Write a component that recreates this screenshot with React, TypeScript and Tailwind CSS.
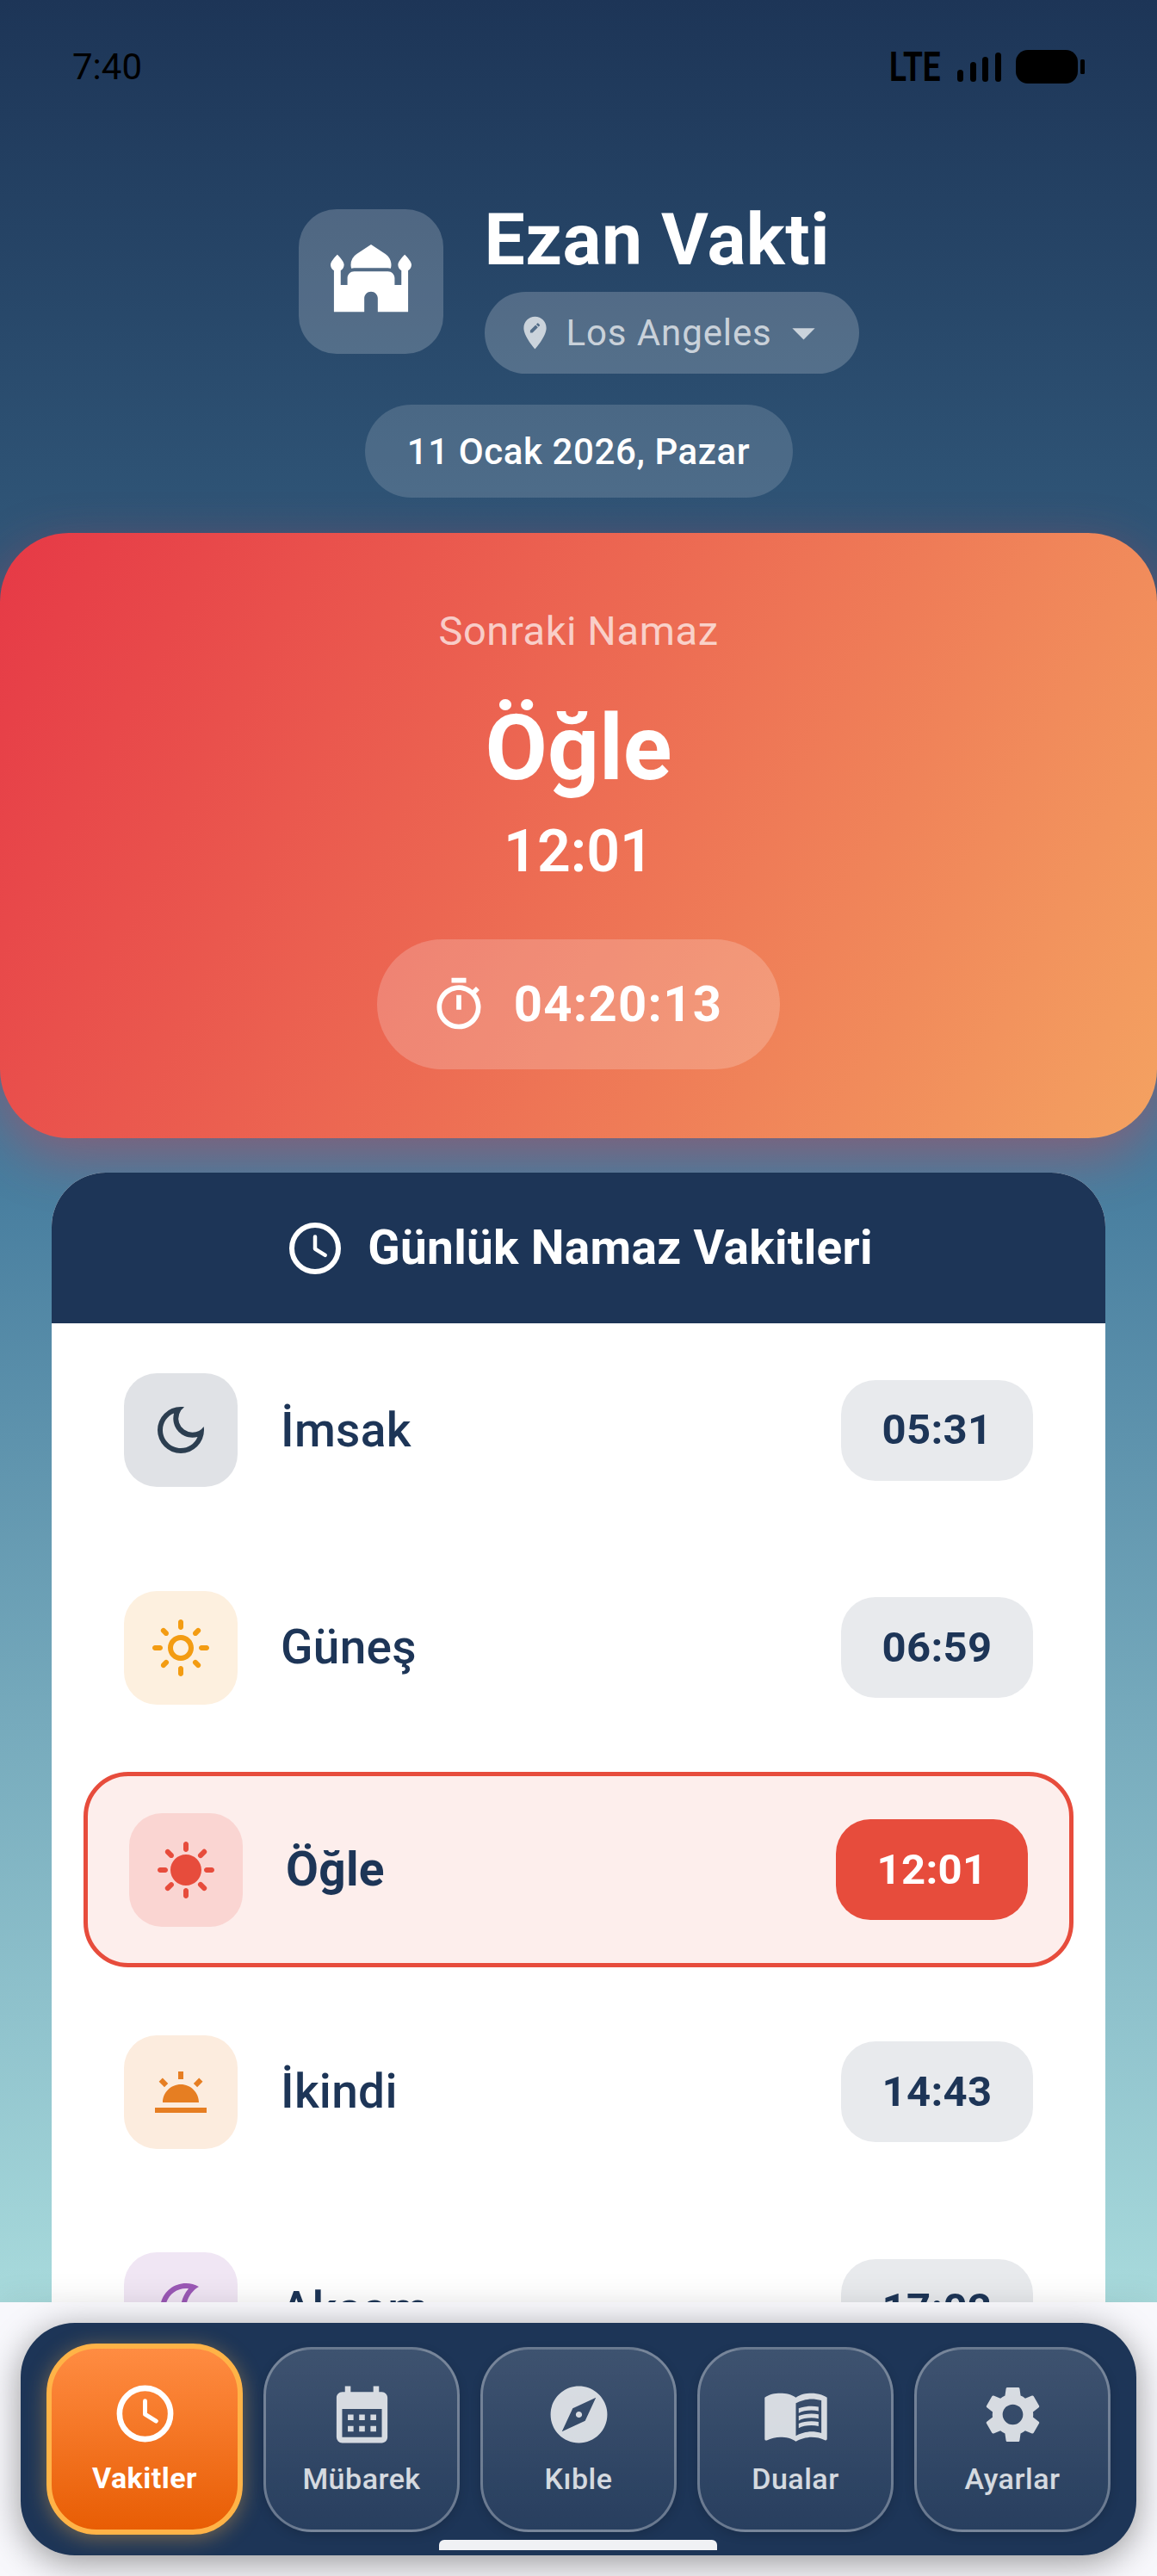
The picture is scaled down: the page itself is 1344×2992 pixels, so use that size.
import { ReactNode } from "react";
import {
  MdMosque,
  MdEditLocation,
  MdArrowDropDown,
  MdOutlineTimer,
  MdOutlineDarkMode,
  MdOutlineLightMode,
  MdSunny,
  MdWbTwilight,
  MdOutlineNightlight,
  MdCalendarMonth,
  MdExplore,
  MdMenuBook,
  MdSettings,
} from "react-icons/md";

function RoundClock({ size }: { size: number }) {
  return (
    <svg width={size} height={size} viewBox="0 0 24 24" fill="none" stroke="currentColor">
      <circle cx="12" cy="12" r="9" strokeWidth="2" />
      <path d="M12 7.5v4.7l3.9 2.4" strokeWidth="1.5" strokeLinecap="round" strokeLinejoin="round" />
    </svg>
  );
}

function StatusBar() {
  return (
    <div className="h-[156px] shrink-0 flex items-center justify-between pl-[84px] pr-[84px] text-black">
      <span className="text-[42px] leading-none">7:40</span>
      <div className="flex items-center">
        <span className="text-[48px] leading-none font-bold inline-block w-[60px] scale-x-[0.77] origin-left">LTE</span>
        <svg width="148" height="42" viewBox="0 0 148 42" className="ml-[19px]" fill="currentColor">
          <rect x="0" y="24" width="7" height="14" rx="3.5" />
          <rect x="15" y="15" width="7" height="23" rx="3.5" />
          <rect x="29" y="9" width="7" height="29" rx="3.5" />
          <rect x="44" y="4" width="7" height="34" rx="3.5" />
          <rect x="68" y="1" width="72" height="39" rx="14" />
          <rect x="143" y="12" width="5" height="17" rx="1.5" />
        </svg>
      </div>
    </div>
  );
}

function Header() {
  return (
    <div className="flex flex-col items-center text-white">
      <div className="flex items-start gap-[48px] mt-[74px]">
        <div className="mt-[13px] w-[168px] h-[168px] rounded-[44px] bg-white/20 flex items-center justify-center">
          <MdMosque size={94} />
        </div>
        <div className="flex flex-col items-start">
          <h1 className="text-[84px] leading-[98px] font-bold tracking-[0.5px]">Ezan Vakti</h1>
          <div className="mt-[11px] h-[95px] w-[435px] rounded-full bg-white/20 flex items-center pl-[36px] text-white/70">
            <MdEditLocation size={45} />
            <span className="ml-[14px] text-[42px] tracking-[0.9px]">Los Angeles</span>
            <MdArrowDropDown size={63} className="ml-[5px]" />
          </div>
        </div>
      </div>
      <div className="mt-[36px] h-[108px] w-[497px] rounded-full bg-white/15 flex items-center justify-center text-[42px] font-medium tracking-[0.6px]">
        11 Ocak 2026, Pazar
      </div>
    </div>
  );
}

function NextPrayer() {
  return (
    <div className="mt-[41px] h-[703px] rounded-[80px] bg-[linear-gradient(118deg,#e63946,#f4a261)] shadow-[0_21px_63px_rgba(230,57,70,0.4)] flex flex-col items-center pt-[89px] text-white">
      <div className="text-[47px] leading-[50px] tracking-[0.6px] text-white/70">Sonraki Namaz</div>
      <div className="mt-[56px] text-[105px] leading-[112px] font-bold">Öğle</div>
      <div className="mt-[23px] text-[68px] leading-[80px] font-semibold">12:01</div>
      <div className="mt-[62px] h-[151px] w-[468px] rounded-full bg-white/20 flex items-center justify-center gap-[30px] pr-[6px]">
        <MdOutlineTimer size={68} />
        <span className="text-[58px] font-bold tracking-[1.3px]">04:20:13</span>
      </div>
    </div>
  );
}

interface Prayer {
  name: string;
  time: string;
  icon: ReactNode;
  iconClass: string;
  active?: boolean;
}

const prayers: Prayer[] = [
  { name: "İmsak", time: "05:31", icon: <MdOutlineDarkMode size={72} />, iconClass: "bg-[#e0e2e6] text-[#2c3e50]" },
  { name: "Güneş", time: "06:59", icon: <MdOutlineLightMode size={72} />, iconClass: "bg-[#fdf0df] text-[#f39c12]" },
  { name: "Öğle", time: "12:01", icon: <MdSunny size={72} />, iconClass: "bg-[#fad5d2] text-[#e74c3c]", active: true },
  { name: "İkindi", time: "14:43", icon: <MdWbTwilight size={72} />, iconClass: "bg-[#fcecde] text-[#e67e22]" },
  { name: "Akşam", time: "17:02", icon: <MdOutlineNightlight size={72} />, iconClass: "bg-[#f0e6f4] text-[#9b59b6]" },
  { name: "Yatsı", time: "18:25", icon: <MdOutlineDarkMode size={72} />, iconClass: "bg-[#e0e2e6] text-[#2c3e50]" },
];

function PrayerRow({ prayer }: { prayer: Prayer }) {
  return (
    <div
      className={
        prayer.active
          ? "flex items-center rounded-[52px] border-[5px] border-[#e74c3c] bg-[#fdeeec] px-[48px] py-[42.5px]"
          : "flex items-center px-[47px] py-[42px]"
      }
    >
      <div className={"w-[132px] h-[132px] rounded-[38px] flex items-center justify-center " + prayer.iconClass}>
        {prayer.icon}
      </div>
      <span
        className={
          "ml-[50px] flex-1 text-[55px] tracking-[0.3px] text-[#1d3557] " +
          (prayer.active ? "font-bold" : "font-medium")
        }
      >
        {prayer.name}
      </span>
      <div
        className={
          "w-[223px] h-[117px] rounded-[40px] flex items-center justify-center text-[49px] font-bold tracking-[0.3px] " +
          (prayer.active ? "bg-[#e74c3c] text-white" : "bg-[#e8eaed] text-[#1d3557]")
        }
      >
        {prayer.time}
      </div>
    </div>
  );
}

function PrayerList() {
  return (
    <div className="mx-[60px] mt-[40px] rounded-[63px] bg-white overflow-hidden">
      <div className="h-[175px] bg-[#1d3557] text-white flex items-center justify-center gap-[25px]">
        <RoundClock size={72} />
        <span className="text-[55px] font-bold tracking-[0.3px]">Günlük Namaz Vakitleri</span>
      </div>
      <div className="px-[37px] pt-[16px] pb-[42px] flex flex-col gap-[36.5px]">
        {prayers.map((p) => (
          <PrayerRow key={p.name} prayer={p} />
        ))}
      </div>
    </div>
  );
}

const navItems = [
  { label: "Vakitler", icon: <RoundClock size={79} />, active: true },
  { label: "Mübarek", icon: <MdCalendarMonth size={79} /> },
  { label: "Kıble", icon: <MdExplore size={79} /> },
  { label: "Dualar", icon: <MdMenuBook size={79} /> },
  { label: "Ayarlar", icon: <MdSettings size={79} /> },
];

function BottomNav() {
  return (
    <div className="relative h-[318px] shrink-0 bg-[#f8f8fc] px-[24px] pt-[24px] shadow-[0_-8px_32px_rgba(0,0,0,0.06)]">
      <div className="relative h-[270px] rounded-[63px] bg-[#1d3557] shadow-[0_8px_42px_rgba(0,0,0,0.4)] px-[30px] flex items-center gap-[24px]">
        {navItems.map((item) => (
          <div
            key={item.label}
            className={
              "w-[228px] flex flex-col items-center justify-start pt-[36px] " +
              (item.active
                ? "h-[222px] rounded-[58px] border-[6px] border-[#ffb347] bg-[linear-gradient(180deg,#ff8c42,#e85d04)] shadow-[0_4px_24px_rgba(255,179,71,0.4)] text-white"
                : "h-[215px] rounded-[56px] border-[3px] border-white/30 bg-[linear-gradient(180deg,rgba(255,255,255,0.15),rgba(255,255,255,0.05))] shadow-[0_4px_12px_rgba(0,0,0,0.15)] text-white/80")
            }
          >
            {item.icon}
            <span
              className={
                "mt-[13px] text-[34px] leading-[44px] tracking-[0.5px] " + (item.active ? "font-bold" : "font-medium")
              }
            >
              {item.label}
            </span>
          </div>
        ))}
        <div className="absolute bottom-[6px] left-[486px] w-[323px] h-[12px] rounded-t-[6px] bg-[#f0f1f4]" />
      </div>
    </div>
  );
}

export default function App() {
  return (
    <div className="w-[1344px] h-[2992px] flex flex-col overflow-hidden [font-family:Roboto,sans-serif]">
      <div className="flex-1 min-h-0 overflow-hidden bg-[linear-gradient(180deg,#1d3557_0%,#457b9d_50%,#a8dadc_100%)]">
        <StatusBar />
        <Header />
        <NextPrayer />
        <PrayerList />
      </div>
      <BottomNav />
    </div>
  );
}
